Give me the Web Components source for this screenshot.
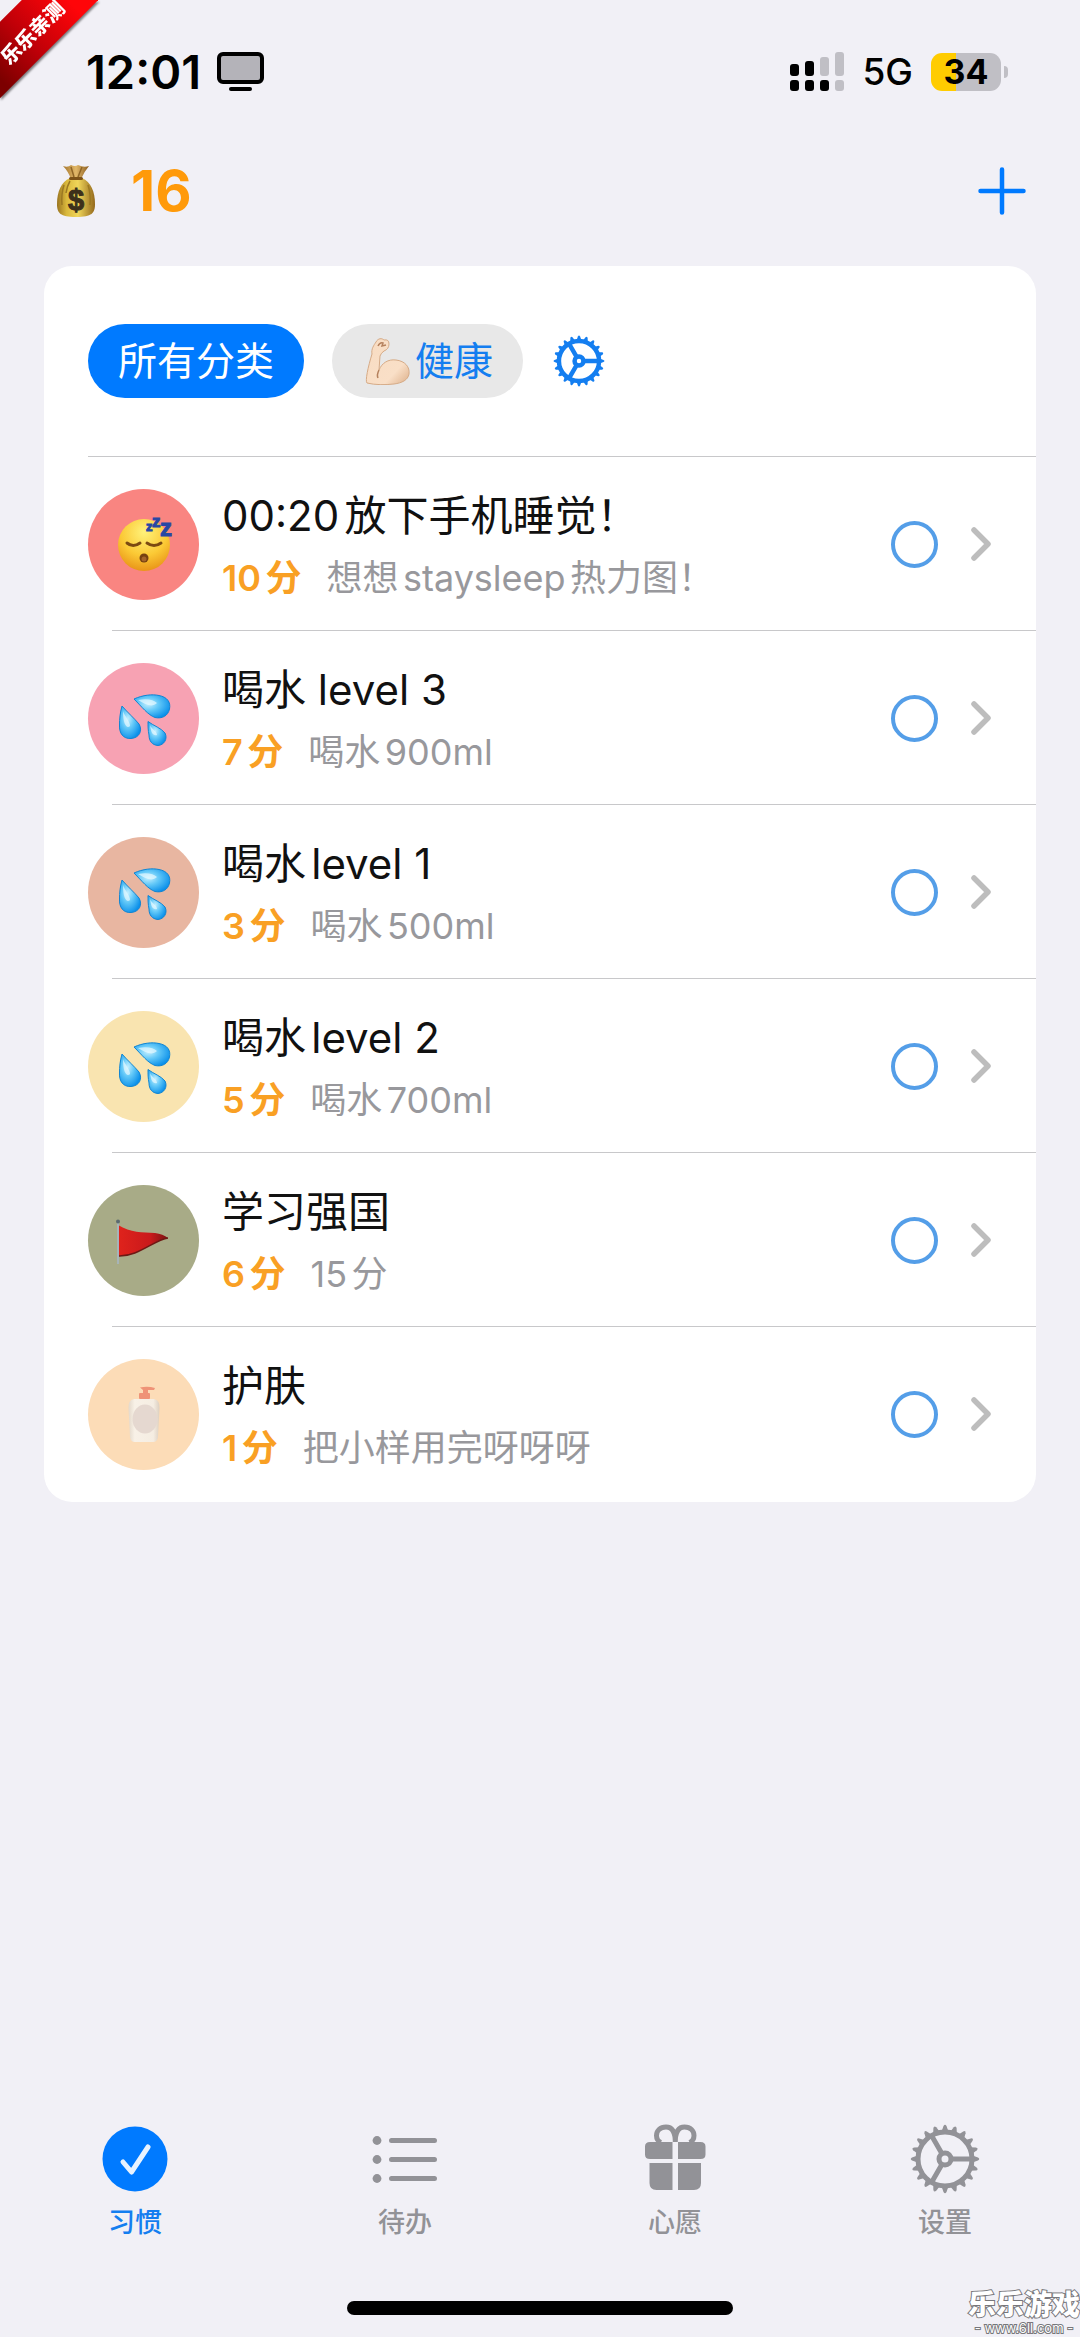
<!DOCTYPE html>
<html lang="zh-CN">
<head>
<meta charset="utf-8">
<meta name="viewport" content="width=device-width, initial-scale=1">
<title>习惯</title>
<style>
  body {
    margin: 0;
    background: #f1f0f6;
    color: #111;
    font-family: Inter, "Noto Sans CJK SC", sans-serif;
    text-autospace: normal;
  }
</style>
</head>
<body>
<habit-app></habit-app>

<script>
// the gear is twenty short teeth round a ring, with three spokes
const gear = (weight) => {
  let teeth = ''
  for (let i = 0; i < 20; i++) {
    teeth += `<path d="M61 31 L68 33.5 Q70.5 35 68 36.5 L61 39Z" transform="rotate(${i * 18} 35 35)"/>`
  }
  return `
    <svg viewBox="0 0 70 70" fill="currentColor">
      ${teeth}
      <g fill="none" stroke="currentColor" stroke-width="${weight}">
        <circle cx="35" cy="35" r="27"/>
        <circle cx="35" cy="35" r="6"/>
        <path d="M41 35H62M32 29.800L21.500 11.600M32 40.200L21.500 58.400"/>
      </g>
    </svg>`
}

const icons = {
  gear: gear(5),
  gearBold: gear(6),
  check: `
    <svg viewBox="0 0 70 70" fill="none">
      <circle cx="35" cy="35" r="32.500" fill="#007aff"/>
      <path d="M23 38L31.500 48L48 23" stroke="#e9f3ff" stroke-width="5" stroke-linecap="round" stroke-linejoin="round"/>
    </svg>`,
  list: `
    <svg viewBox="0 0 70 70" fill="currentColor">
      <circle cx="7" cy="16.500" r="4.400"/><circle cx="7" cy="35.500" r="4.400"/><circle cx="7" cy="54.500" r="4.400"/>
      <path d="M21.500 16.500H64.500M21.500 35.500H64.500M21.500 54.500H64.500" stroke="currentColor" stroke-width="5" stroke-linecap="round"/>
    </svg>`,
  gift: `
    <svg viewBox="0 0 70 70" fill="currentColor">
      <path d="M32.500 35H10Q5 35 5 30.500V22.500Q5 18 10 18H32.500ZM38 35H60.500Q65.500 35 65.500 30.500V22.500Q65.500 18 60.500 18H38Z"/>
      <path d="M32.500 39H9.500V59Q9.500 66 16.500 66H32.500ZM38 39H61V59Q61 66 54 66H38Z"/>
      <path d="M35.300 18C35.300 8 32 3 26 3C20 3 16.500 7 16.500 11.500C16.500 15 18.500 17.500 21 18.500M35.300 18C35.300 8 38.500 3 44.500 3C50.500 3 54 7 54 11.500C54 15 52 17.500 49.500 18.500" fill="none" stroke="currentColor" stroke-width="5"/>
    </svg>`,
  plus: `
    <svg viewBox="0 0 48 48" fill="none" stroke="#007aff" stroke-width="4.500" stroke-linecap="round">
      <path d="M24 2.500V45.500M2.500 24H45.500"/>
    </svg>`,
  chevron: `
    <svg viewBox="0 0 36 36" fill="none" stroke="#bdbdbd" stroke-width="5.500" stroke-linecap="round" stroke-linejoin="round">
      <path d="M12 4L26 18L12 32"/>
    </svg>`,
  display: `
    <svg viewBox="0 0 48 40">
      <rect x="2" y="2" width="43" height="28" rx="4" fill="#b4b3b9" stroke="#000" stroke-width="4"/>
      <path d="M14 37H33" stroke="#000" stroke-width="4" stroke-linecap="round"/>
    </svg>`,
  signal: `
    <svg viewBox="0 0 54 40">
      <g fill="#c0bfc5">
        <rect x="30" y="5" width="9" height="19" rx="3"/><rect x="45" y="0" width="9" height="24" rx="3"/>
        <rect x="45" y="28" width="9" height="11" rx="3"/>
      </g>
      <rect x="0" y="12" width="9" height="12" rx="3"/><rect x="15" y="9" width="9" height="15" rx="3"/>
      <rect x="0" y="28" width="9" height="11" rx="3"/><rect x="15" y="28" width="9" height="11" rx="3"/>
      <rect x="30" y="28" width="9" height="11" rx="3"/>
    </svg>`,
  moneybag: `
    <svg viewBox="0 0 40 54">
      <defs>
        <linearGradient id="bag"><stop offset="0" stop-color="#9a7420"/><stop offset=".25" stop-color="#d9b83c"/><stop offset=".55" stop-color="#f0d65a"/><stop offset="1" stop-color="#94691c"/></linearGradient>
        <linearGradient id="neck"><stop offset="0" stop-color="#a3742c"/><stop offset=".5" stop-color="#e2b869"/><stop offset="1" stop-color="#8a5c20"/></linearGradient>
      </defs>
      <path d="M14 14C5 18 1 28 1 40C1 49 4 53 20 53C36 53 39 49 39 40C39 28 35 18 26 14Z" fill="url(#bag)"/>
      <path d="M8 21Q5 30 6 41M32 21Q35 30 34 41M14 17Q11 22 10 29" fill="none" stroke="#9b7822" stroke-width="1.500"/>
      <path d="M7 2Q12 4 15 1Q19 3 22 1Q28 4 33 2Q28 8 25 15H15Q12 7 7 2Z" fill="url(#neck)"/>
      <path d="M15 3L18 13M26 3L22 13" stroke="#8f6526" stroke-width="1.500"/>
      <rect x="13" y="13" width="14" height="3" rx="1.500" fill="#7e5318"/>
      <text x="20" y="46" font-family="Liberation Sans, sans-serif" font-size="29" text-anchor="middle" fill="#3d301b" stroke="#3d301b">$</text>
    </svg>`,
  arm: `
    <svg viewBox="0 0 48 48">
      <defs><linearGradient id="skin" x1="0" y1="0" x2="1" y2="1"><stop offset="0" stop-color="#f8dcc2"/><stop offset=".7" stop-color="#f9dfc7"/><stop offset="1" stop-color="#dcae88"/></linearGradient></defs>
      <path d="M4 46C2 44 5 30 9 17C8 12 11 8 13 5C15 1 19 1 21 3Q26 2 26 7Q26 12 21 14Q18 16 17 19L16 33C19 26 25 22 33 23C42 24 47 30 46 37C45 43 39 46 31 47C22 48 12 48 4 46Z" fill="url(#skin)" stroke="#d5aa86" stroke-width="1"/>
      <path d="M16 33C14 37 14 39 15 41M15 9Q17 5 20 6L19 9L23 8" fill="none" stroke="#b5815d" stroke-width="1.500"/>
    </svg>`,
  sleep: `
    <svg viewBox="0 0 60 60">
      <defs><radialGradient id="face" cx=".5" cy=".25" r=".75"><stop offset="0" stop-color="#fff27a"/><stop offset=".6" stop-color="#fbc935"/><stop offset="1" stop-color="#e99518"/></radialGradient></defs>
      <circle cx="30" cy="31" r="26" fill="url(#face)"/>
      <path d="M13 29Q19 34 26 29M33 29Q40 34 47 29" fill="none" stroke="#7b4a12" stroke-width="3" stroke-linecap="round"/>
      <ellipse cx="30" cy="44" rx="4.500" ry="4.500" fill="#754010"/><ellipse cx="30" cy="45" rx="2.500" ry="2.500" fill="#a3632a"/>
      <g fill="#2747a4" stroke="#2747a4" font-family="Liberation Sans, sans-serif" font-weight="700">
        <text x="32" y="17" font-size="13">z</text><text x="38" y="13" font-size="17">z</text><text x="46" y="22" font-size="24">z</text>
      </g>
    </svg>`,
  drops: `
    <svg viewBox="0 0 60 60">
      <defs><radialGradient id="drop" cx=".4" cy=".4" r=".65"><stop offset="0" stop-color="#c4efff"/><stop offset=".45" stop-color="#62c8f8"/><stop offset="1" stop-color="#0b90ea"/></radialGradient></defs>
      <g fill="url(#drop)" stroke="#1185d2" stroke-width="1">
        <path d="M20 11C29 7 38 6 45 7.500C53 9 57 14 55.500 21C54 28 48 31 41 29.500C34 27 28 19 20 11Z"/>
        <path d="M8 18C14 25 20 30 25 36C29 43 25 50 17 50.500C9 51 5 45 5.500 37C5.500 31 6 25 8 18Z"/>
        <path d="M34 33.500C40 38 47 40 51 45C54 51 50 57 44 57.500C38 57 35 53 35 47C34 42 34 38 34 33.500Z"/>
      </g>
      <path d="M24 12C33 10 40 12 43 15C39 19 33 18 24 12ZM9 23C11 29 16 33 16 38C13 41 9 37 9 23ZM36 37C38 42 43 43 43 47C39 48 37 45 36 37Z" fill="#e7f9ff" opacity=".7"/>
    </svg>`,
  flag: `
    <svg viewBox="0 0 60 60">
      <defs><linearGradient id="flag"><stop offset="0" stop-color="#e0231c"/><stop offset=".65" stop-color="#c9191b"/><stop offset="1" stop-color="#791313"/></linearGradient></defs>
      <path d="M4 15C17 23 28 22 41 23Q49 24 54 28C40 30 24 47 4 46Z" fill="url(#flag)"/>
      <path d="M54 28C40 30 24 47 4 46" fill="none" stroke="#6e1914" stroke-width="1.500"/>
      <path d="M4 12V54" stroke="#a7b4b8" stroke-width="2"/><circle cx="4" cy="11.500" r="2" fill="#5c6b70"/>
    </svg>`,
  lotion: `
    <svg viewBox="0 0 60 60">
      <defs><linearGradient id="bottle"><stop offset="0" stop-color="#e3d8ca"/><stop offset=".2" stop-color="#f8f1e7"/><stop offset=".8" stop-color="#f5ede2"/><stop offset="1" stop-color="#dccfc0"/></linearGradient></defs>
      <path d="M26 3.500Q34 2 41 4L40 6H34V9H29V6Z" fill="#ef9377"/>
      <rect x="25" y="9" width="11" height="6" rx="1" fill="#ef9377"/>
      <path d="M20 15H40Q46 16 45.500 24L44 53Q43.500 58 39 58H21Q16.500 58 16 53L14.500 24Q14 16 20 15Z" fill="url(#bottle)"/>
      <ellipse cx="31" cy="35" rx="12.500" ry="14.500" fill="#e5d8d0"/>
    </svg>`
}

customElements.define('app-icon',

  class extends HTMLElement {

    static get observedAttributes() {
      return ['name']
    }

    constructor() {
      super()
      this.attachShadow({ mode: 'open' })
    }

    attributeChangedCallback(attribute, before, name) {
      this.shadowRoot.innerHTML = `
        <style>
          :host {
            display: inline-block;
            flex: none;
          }
          svg {
            display: block;
            width: 100%;
            height: 100%;
          }
        </style>
        ${icons[name]}`
      this.shadowRoot.querySelector('svg').setAttribute('aria-hidden', 'true')
    }
  })

// attaches an open root to the element and fills it from a template
function define(name, html, setup) {
  const template = document.createElement('template')
  template.innerHTML = html

  customElements.define(name,

    class extends HTMLElement {

      constructor() {
        super()
        this.attachShadow({ mode: 'open' })
          .appendChild(template.content.cloneNode(true))
      }

      connectedCallback() {
        if (setup) setup(this, this.shadowRoot)
      }
    })
}

define('status-bar', `
  <style>
    :host {
      display: flex;
      align-items: center;
      justify-content: space-between;
      height: 144px;
      padding: 0 72px 0 86px;
    }
    .side {
      display: flex;
      align-items: center;
    }
    .left {
      gap: 16px;
    }
    .right {
      gap: 18px;
    }
    time {
      color: #000;
      font-size: 47px;
      font-weight: 600;
      line-height: 56px;
    }
    .network {
      color: #000;
      font-size: 37px;
      font-weight: 500;
      line-height: 40px;
    }
    .display {
      width: 48px;
      height: 40px;
    }
    .signal {
      width: 54px;
      height: 40px;
    }
    .battery {
      display: flex;
      align-items: center;
      gap: 3px;
    }
    .level {
      width: 70px;
      border-radius: 11px;
      background: linear-gradient(90deg, #ffcc00 36%, #c0bfc5 36%);
      color: #000;
      font-size: 34px;
      font-weight: 700;
      line-height: 38px;
      text-align: center;
    }
    .nub {
      width: 4px;
      height: 12px;
      border-radius: 0 6px 6px 0;
      background: #c0bfc5;
    }
  </style>
  <div class="side left">
    <time>12:01</time>
    <app-icon class="display" name="display"></app-icon>
  </div>
  <div class="side right">
    <app-icon class="signal" name="signal"></app-icon>
    <span class="network">5G</span>
    <div class="battery"><span class="level">34</span><span class="nub"></span></div>
  </div>
`)

define('score-header', `
  <style>
    :host {
      display: flex;
      align-items: center;
      justify-content: space-between;
      height: 94px;
      padding: 0 54px 0 56px;
    }
    .score {
      display: flex;
      align-items: center;
      gap: 35px;
      color: #ff9a0a;
      font-size: 56px;
      font-weight: 700;
      line-height: 64px;
    }
    .score app-icon {
      width: 40px;
      height: 54px;
    }
    button {
      display: block;
      padding: 0;
      border: 0;
      background: none;
    }
    button app-icon {
      display: block;
      width: 48px;
      height: 48px;
    }
  </style>
  <div class="score"><app-icon name="moneybag"></app-icon><slot></slot></div>
  <button type="button" aria-label="添加"><app-icon name="plus"></app-icon></button>
`)

define('category-chip', `
  <style>
    :host {
      display: block;
    }
    button {
      display: flex;
      align-items: center;
      gap: 3px;
      height: 74px;
      padding: 0 30px;
      border: 0;
      border-radius: 37px;
      background: #e8e8e8;
      color: #147ef0;
      font: inherit;
      font-size: 39px;
      line-height: 56px;
    }
    :host([active]) button {
      background: #007aff;
      color: #fff;
    }
    ::slotted(app-icon) {
      width: 50px;
      height: 48px;
    }
  </style>
  <button type="button"><slot name="icon"></slot><slot></slot></button>
`)

define('habit-card', `
  <style>
    :host {
      display: block;
      margin: 28px 44px 0;
      padding-bottom: 1px;
      border-radius: 28px;
      background: #fff;
      overflow: hidden;
    }
    .categories {
      display: flex;
      align-items: center;
      gap: 28px;
      height: 190px;
      margin-left: 44px;
      border-bottom: 1px solid #c8c8ca;
    }
    .settings {
      padding: 0 2px;
      border: 0;
      background: none;
      color: #147ef0;
    }
    .settings app-icon {
      display: block;
      width: 52px;
      height: 52px;
    }
  </style>
  <div class="categories">
    <slot name="category"></slot>
    <button class="settings" type="button" aria-label="管理分类"><app-icon name="gearBold"></app-icon></button>
  </div>
  <slot></slot>
`)

define('habit-row', `
  <style>
    :host {
      display: block;
      padding-left: 44px;
    }
    .row {
      display: flex;
      align-items: center;
      height: 174px;
      padding-right: 38px;
    }
    :host(:not(:last-of-type))::after {
      content: '';
      display: block;
      height: 1px;
      margin-top: -1px;
      margin-left: 24px;
      background: #c8c8ca;
    }
    .avatar {
      display: grid;
      place-items: center;
      flex: none;
      width: 111px;
      height: 111px;
      border-radius: 50%;
      background: var(--tint);
    }
    .avatar app-icon {
      width: 60px;
      height: 60px;
    }
    label {
      flex: 1;
      min-width: 0;
      padding: 6px 0 0 23px;
    }
    .title {
      display: block;
      font-size: 42px;
      line-height: 62px;
    }
    .detail {
      display: flex;
      gap: 25px;
      color: #98989c;
      font-size: 36px;
      line-height: 62px;
    }
    .points {
      color: #f9a024;
      font-weight: 600;
    }
    input {
      appearance: none;
      flex: none;
      width: 47px;
      height: 47px;
      margin: 0;
      border: 4px solid #549ee8;
      border-radius: 50%;
    }
    input:checked {
      background: #549ee8;
    }
    a {
      display: block;
      margin-left: 24px;
    }
    a app-icon {
      display: block;
      width: 36px;
      height: 36px;
    }
  </style>
  <div class="row">
    <span class="avatar"><app-icon></app-icon></span>
    <label for="done">
      <span class="title"><slot></slot></span>
      <span class="detail"><span class="points"></span><slot name="note"></slot></span>
    </label>
    <input id="done" type="checkbox">
    <a href="#" aria-label="详情"><app-icon name="chevron"></app-icon></a>
  </div>
`, (host, root) => {
  root.querySelector('.avatar app-icon').setAttribute('name', host.getAttribute('icon'))
  root.querySelector('.points').textContent = host.getAttribute('points') + '分'
  host.style.setProperty('--tint', host.getAttribute('tint'))
})

define('tab-item', `
  <style>
    :host {
      flex: 1;
      display: block;
      color: #929297;
    }
    :host([active]) {
      color: #147ef0;
    }
    a {
      display: flex;
      flex-direction: column;
      align-items: center;
      gap: 12px;
      color: inherit;
      text-decoration: none;
      font-size: 27px;
      font-weight: 500;
      line-height: 34px;
    }
    ::slotted(app-icon) {
      width: 70px;
      height: 70px;
    }
  </style>
  <a href="#"><slot name="icon"></slot><span><slot></slot></span></a>
`)

define('tab-bar', `
  <style>
    :host {
      display: block;
      margin-top: auto;
      padding-bottom: 22px;
    }
    nav {
      display: flex;
    }
    .home {
      width: 386px;
      height: 14px;
      margin: 61px auto 0;
      border-radius: 7px;
      background: #000;
    }
  </style>
  <nav><slot></slot></nav>
  <div class="home"></div>
`)

// both marks lie over the corners of the page
define('corner-ribbon', `
  <style>
    :host {
      position: absolute;
      top: 0;
      left: 0;
      width: 98px;
      height: 100px;
      overflow: hidden;
      filter: drop-shadow(1px 2px 1px rgba(0, 0, 0, 0.5));
    }
    span {
      position: absolute;
      top: 3px;
      left: -50px;
      width: 160px;
      padding-top: 8px;
      background: linear-gradient(90deg, #7c0000 15%, #c00008 45%, #ff0509 80%);
      color: #fff;
      font-size: 20px;
      font-weight: 900;
      line-height: 46px;
      text-align: center;
      transform: rotate(-45deg);
    }
  </style>
  <span><slot></slot></span>
`)

define('site-mark', `
  <style>
    :host {
      position: absolute;
      right: 0;
      bottom: 0;
      display: flex;
      flex-direction: column;
      align-items: center;
      color: #fff;
      -webkit-text-stroke: 2px #77777b;
      paint-order: stroke fill;
    }
    b {
      font-size: 28px;
      font-weight: 900;
      line-height: 28px;
    }
    small {
      font-size: 13px;
      line-height: 18px;
    }
  </style>
  <b><slot></slot></b>
  <small><slot name="site"></slot></small>
`)

define('habit-app', `
  <style>
    :host {
      position: relative;
      display: flex;
      flex-direction: column;
      min-height: 100vh;
    }
  </style>
  <status-bar></status-bar>
  <score-header>16</score-header>
  <habit-card>
    <category-chip slot="category" active>所有分类</category-chip>
    <category-chip slot="category"><app-icon slot="icon" name="arm"></app-icon>健康</category-chip>
    <habit-row icon="sleep" tint="#f98581" points="10">00:20放下手机睡觉！<span slot="note">想想staysleep热力图！</span></habit-row>
    <habit-row icon="drops" tint="#f7a2b3" points="7">喝水 level 3<span slot="note">喝水900ml</span></habit-row>
    <habit-row icon="drops" tint="#e8b6a1" points="3">喝水level 1<span slot="note">喝水500ml</span></habit-row>
    <habit-row icon="drops" tint="#f9e4b0" points="5">喝水level 2<span slot="note">喝水700ml</span></habit-row>
    <habit-row icon="flag" tint="#a8ab87" points="6">学习强国<span slot="note">15分</span></habit-row>
    <habit-row icon="lotion" tint="#fcdcb7" points="1">护肤<span slot="note">把小样用完呀呀呀</span></habit-row>
  </habit-card>
  <tab-bar>
    <tab-item active><app-icon slot="icon" name="check"></app-icon>习惯</tab-item>
    <tab-item><app-icon slot="icon" name="list"></app-icon>待办</tab-item>
    <tab-item><app-icon slot="icon" name="gift"></app-icon>心愿</tab-item>
    <tab-item><app-icon slot="icon" name="gear"></app-icon>设置</tab-item>
  </tab-bar>
  <corner-ribbon>乐乐亲测</corner-ribbon>
  <site-mark>乐乐游戏<span slot="site">- www.6ll.com -</span></site-mark>
`)
</script>
</body>
</html>
